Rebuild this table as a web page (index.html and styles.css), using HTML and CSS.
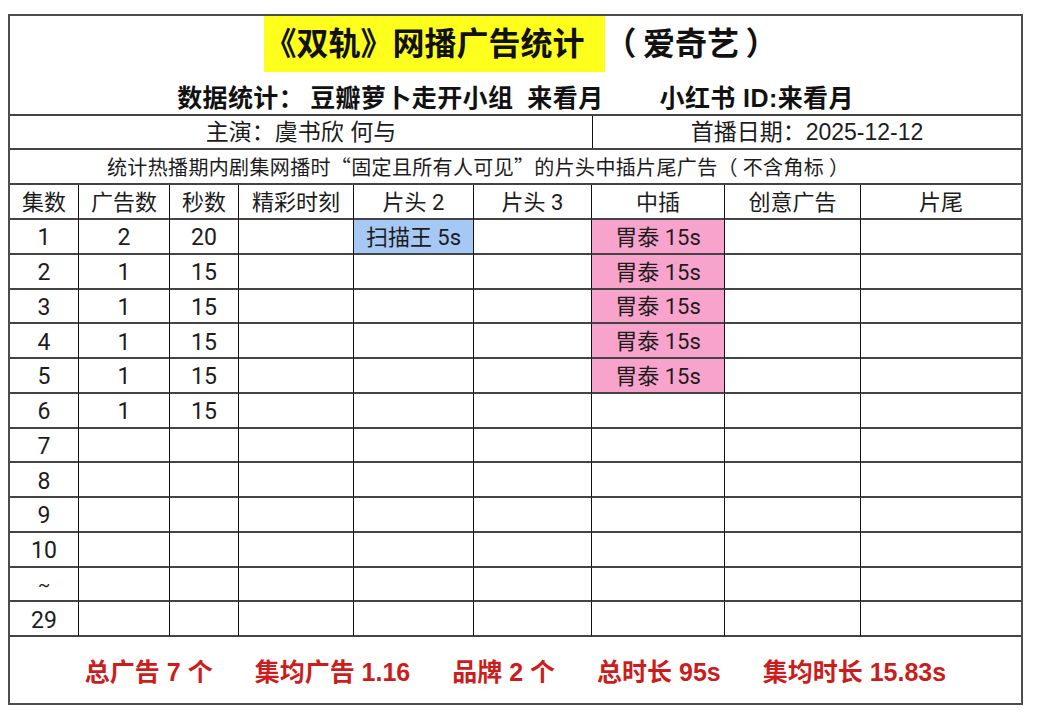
FILE: index.html
```html
<!DOCTYPE html>
<html lang="zh-CN">
<head>
<meta charset="utf-8">
<title>《双轨》网播广告统计</title>
<link rel="stylesheet" href="styles.css">
</head>
<body>
<div class="sheet">
  <div class="head">
    <div class="title"><span class="hl">《双轨》网播广告统计</span><span class="platform">（&thinsp;爱奇艺&thinsp;）</span></div>
    <div class="sub">
      <span class="src"><span>数据统计：</span><span>豆瓣萝卜走开小组</span><span>来看月</span></span>
      <span>小红书 ID:来看月</span>
    </div>
  </div>
  <div class="info">
    <div class="cast">主演：虞书欣 何与</div>
    <div class="date">首播日期：2025-12-12</div>
  </div>
  <div class="notice">统计热播期内剧集网播时“固定且所有人可见”的片头中插片尾广告（ 不含角标 ）</div>
  <div class="grid">
    <div class="th">集数</div><div class="th">广告数</div><div class="th">秒数</div><div class="th">精彩时刻</div><div class="th">片头 2</div><div class="th">片头 3</div><div class="th">中插</div><div class="th">创意广告</div><div class="th">片尾</div>

    <div class="num">1</div><div class="num">2</div><div class="num">20</div><div></div><div class="blue">扫描王 5s</div><div></div><div class="pink">胃泰 15s</div><div></div><div></div>
    <div class="num">2</div><div class="num">1</div><div class="num">15</div><div></div><div></div><div></div><div class="pink">胃泰 15s</div><div></div><div></div>
    <div class="num">3</div><div class="num">1</div><div class="num">15</div><div></div><div></div><div></div><div class="pink">胃泰 15s</div><div></div><div></div>
    <div class="num">4</div><div class="num">1</div><div class="num">15</div><div></div><div></div><div></div><div class="pink">胃泰 15s</div><div></div><div></div>
    <div class="num">5</div><div class="num">1</div><div class="num">15</div><div></div><div></div><div></div><div class="pink">胃泰 15s</div><div></div><div></div>
    <div class="num">6</div><div class="num">1</div><div class="num">15</div><div></div><div></div><div></div><div></div><div></div><div></div>
    <div class="num">7</div><div></div><div></div><div></div><div></div><div></div><div></div><div></div><div></div>
    <div class="num">8</div><div></div><div></div><div></div><div></div><div></div><div></div><div></div><div></div>
    <div class="num">9</div><div></div><div></div><div></div><div></div><div></div><div></div><div></div><div></div>
    <div class="num">10</div><div></div><div></div><div></div><div></div><div></div><div></div><div></div><div></div>
    <div class="tilde">~</div><div></div><div></div><div></div><div></div><div></div><div></div><div></div><div></div>
    <div class="num">29</div><div></div><div></div><div></div><div></div><div></div><div></div><div></div><div></div>
  </div>
  <div class="footer">
    <span>总广告 7 个</span>
    <span>集均广告 1.16</span>
    <span>品牌 2 个</span>
    <span>总时长 95s</span>
    <span>集均时长 15.83s</span>
  </div>
</div>
</body>
</html>
```

FILE: styles.css
```css
html, body {
  margin: 0;
  padding: 0;
  background: #ffffff;
}

body {
  font-family: "Noto Sans CJK SC", "Noto Sans", sans-serif;
  color: #1c1c1c;
}

.sheet {
  margin: 14px 0 0 8px;
  width: 1015px;
  border: 2px solid #4d4d4d;
  box-sizing: border-box;
  background: #ffffff;
}

.head {
  height: 100px;
  box-sizing: border-box;
  border-bottom: 2px solid #444444;
  display: flex;
  flex-direction: column;
  align-items: center;
}

.title {
  display: flex;
  height: 56px;
  align-items: center;
  padding-left: 10px;
  font-family: "Liberation Sans", "Noto Sans CJK SC", sans-serif;
  font-size: 32px;
  font-weight: 700;
  line-height: 56px;
  color: #111111;
}

.hl {
  background: #ffff1e;
  height: 56px;
  padding: 0 20px 0 1px;
}

.platform {
  margin-left: 0;
}

.sub {
  margin-top: 10px;
  display: flex;
  gap: 56px;
  font-family: "Liberation Sans", "Noto Sans CJK SC", sans-serif;
  font-size: 25px;
  font-weight: 700;
  line-height: 32px;
  color: #111111;
  letter-spacing: 0.4px;
}

.src {
  display: flex;
  gap: 14px;
}

.src > span:first-child {
  margin-right: -8px;
}

.info {
  display: flex;
  height: 34px;
  box-sizing: border-box;
  border-bottom: 2px solid #444444;
  font-family: "Liberation Sans", "Noto Sans CJK SC", sans-serif;
  font-size: 23px;
  line-height: 33px;
}

.cast {
  width: 582px;
  border-right: 1px solid #111111;
  text-align: center;
}

.date {
  flex: 1;
  text-align: center;
}

.notice {
  height: 35px;
  box-sizing: border-box;
  border-bottom: 2px solid #444444;
  font-size: 20px;
  line-height: 33px;
  padding-left: 97px;
  letter-spacing: 0.35px;
}

.grid {
  display: grid;
  grid-template-columns: 69px 91px 69px 115px 120px 118px 133px 136px 1fr;
  grid-template-rows: 35px;
  grid-auto-rows: 34.75px;
  font-family: "Roboto", "Noto Sans CJK SC", sans-serif;
}

.grid > div {
  border-right: 1px solid #111111;
  border-bottom: 2px solid #444444;
  box-sizing: border-box;
  display: flex;
  align-items: center;
  justify-content: center;
  padding-top: 3px;
  font-size: 22px;
  line-height: 1;
}

.grid > div:nth-child(9n) {
  border-right: none;
}

.grid > .num {
  font-size: 23px;
}

.grid > .tilde {
  font-size: 18px;
}

.grid > .blue {
  background: #a5c8f5;
}

.grid > .pink {
  background: #f8a3cb;
}

.footer {
  height: 66px;
  display: flex;
  justify-content: center;
  align-items: center;
  gap: 42px;
  font-family: "Liberation Sans", "Noto Sans CJK SC", sans-serif;
  color: #cc1d1d;
  font-weight: 700;
  font-size: 25px;
}
```
